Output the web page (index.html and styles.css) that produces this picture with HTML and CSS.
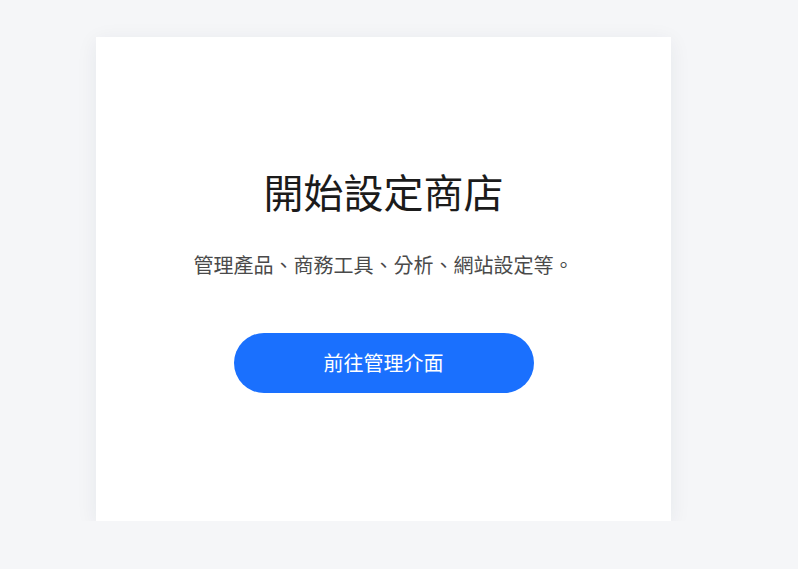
FILE: index.html
```html
<!DOCTYPE html>
<html lang="zh-Hant">

<head>
    <meta charset="UTF-8">
    <title>開始設定商店</title>
    <link rel="stylesheet" href="styles.css">
</head>

<body>
    <div class="page">
        <div class="setup-card">
            <h1 class="setup-title">開始設定商店</h1>
            <p class="setup-desc">管理產品、商務工具、分析、網站設定等。</p>
            <a class="setup-btn" href="#">前往管理介面</a>
        </div>
    </div>
</body>

</html>
```

FILE: styles.css
```css
* {
    margin: 0;
    padding: 0;
    box-sizing: border-box;
}

body {
    background: #f5f6f8;
    font-family: "Noto Sans CJK TC", "Noto Sans", sans-serif;
}

.page {
    padding: 37px 0 0 96px;
}

.setup-card {
    width: 575px;
    height: 484px;
    background: #fff;
    box-shadow: 0 4px 20px rgba(30, 40, 70, .07);
    display: flex;
    flex-direction: column;
    align-items: center;
    padding-top: 130px;
}

.setup-title {
    font-size: 40px;
    font-weight: 400;
    line-height: 48px;
    color: #1b1b1b;
}

.setup-desc {
    margin-top: 35px;
    font-size: 20px;
    line-height: 30px;
    color: #4a4a4a;
}

.setup-btn {
    margin-top: 53px;
    width: 300px;
    height: 60px;
    border-radius: 30px;
    background: #1a70fe;
    color: #fff;
    font-size: 20px;
    line-height: 60px;
    text-align: center;
    text-decoration: none;
}
```
